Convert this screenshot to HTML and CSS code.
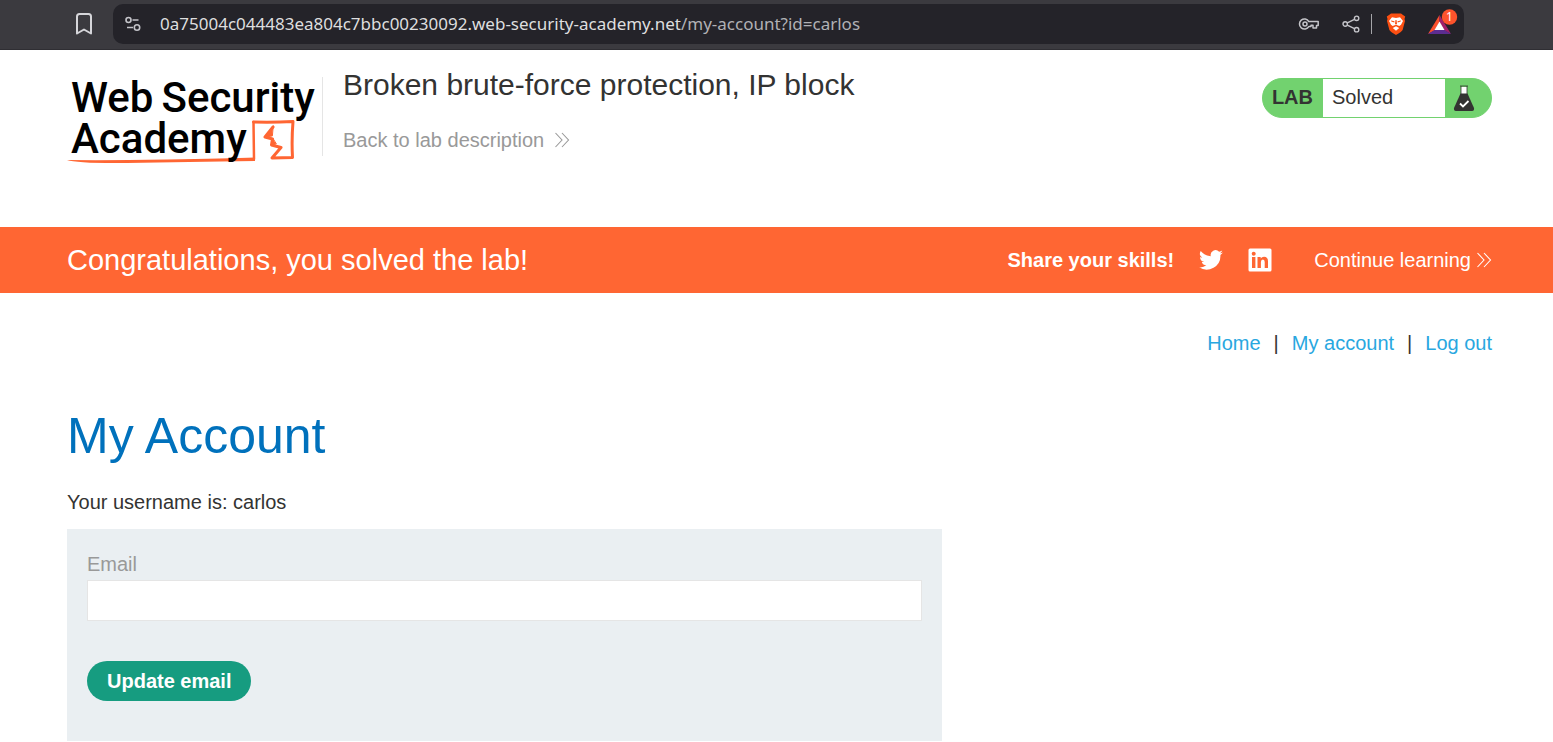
FILE: index.html
```
<!DOCTYPE html>
<html lang="en">
<head>
<meta charset="utf-8">
<title>Broken brute-force protection, IP block</title>
<link rel="stylesheet" href="styles.css">
</head>
<body>
<div class="browser">
  <button class="tool" aria-label="Bookmark">
    <svg width="18" height="24" viewBox="0 0 18 24" fill="none" stroke="#d6d6da" stroke-width="2" stroke-linejoin="round"><path d="M2 4.500Q2 2 4.500 2H13.500Q16 2 16 4.500V21.500L9 17.500L2 21.500Z"/></svg>
  </button>
  <div class="address">
    <button class="tool" aria-label="Site information">
      <svg width="18" height="18" viewBox="0 0 18 18" fill="none" stroke="#c4c4c9" stroke-width="1.600"><circle cx="4.500" cy="5" r="2.500"/><path d="M8.500 5H14.500M3 12.500H9"/><circle cx="13" cy="12.500" r="2.700"/></svg>
    </button>
    <div class="url">0a75004c044483ea804c7bbc00230092.web-security-academy.net<span class="path">/my-account?id=carlos</span></div>
    <div class="tools">
      <button class="tool key" aria-label="Passwords">
        <svg width="22" height="16" viewBox="0 0 22 16" fill="none" stroke="#c4c4c9" stroke-width="1.500" stroke-linejoin="round"><path d="M10.800 5.500A5 5 0 1 0 10.800 10.500H13V9.200H15V12H18.500V9.500H20.200V5.500Z"/><circle cx="7" cy="8" r="2"/></svg>
      </button>
      <button class="tool share" aria-label="Share">
        <svg width="18" height="18" viewBox="0 0 18 18" fill="none" stroke="#c4c4c9" stroke-width="1.400"><path d="M5.300 7.900L12.500 4.300M5.300 10.100L12.500 13.700"/><circle cx="3.200" cy="9" r="2.200"/><circle cx="14.600" cy="3.300" r="2.200"/><circle cx="14.600" cy="14.700" r="2.200"/></svg>
      </button>
      <span class="divider"></span>
      <button class="tool shield" aria-label="Brave Shields">
        <svg width="20" height="24" viewBox="0 0 20 24"><path fill="#fb4f12" d="M5 1.500H15L17 3L19.200 4.500L18.500 7L19 9L16.600 18Q15.500 20 10 23Q4.500 20 3.400 18L1 9L1.500 7L.8 4.500L3 3Z"/><path fill="#fff" d="M6 5.200L10 6L14 5.200L17 9L15 12.700L13.300 14L10 12.700L6.700 14L5 12.700L3 9ZM10 14.300L13.200 16L10 18.700L6.800 16Z"/><path fill="#fb4f12" d="M5 8.500L8.500 9.200L8.300 10.500L5.300 9.500ZM15 8.500L11.500 9.200L11.700 10.500L14.700 9.500ZM9.500 8H10.500L11 12L10 12.500L9 12Z"/></svg>
      </button>
      <button class="tool" aria-label="Rewards">
        <svg width="32" height="30" viewBox="0 0 32 30"><path fill="#fb4f2c" d="M12.500 6L1 25L7.500 21.500L12.500 13Z"/><path fill="#a0206a" d="M12.500 6L24 25L17.500 21.500L12.500 13Z"/><path fill="#5c2d91" d="M1 25L7.500 21H17.500L24 25Z"/><path fill="#fff" d="M12.500 12.500L17.500 21H7.500Z"/><circle cx="22.500" cy="8" r="7.700" fill="#fc532c"/><text x="22.500" y="12" text-anchor="middle" class="count">1</text></svg>
      </button>
    </div>
  </div>
</div>

<header class="header">
  <a class="logo" href="#" aria-label="Web Security Academy">
    <span class="line"><span>Web</span><span>Security</span></span>
    <span class="line">Academy</span>
    <svg class="mark" width="240" height="50" viewBox="0 0 240 50" fill="none" stroke="#ff6633" stroke-width="3" stroke-linejoin="round" stroke-linecap="round"><path fill="#ff6633" stroke="none" d="M0 44Q40 44.500 100 43.500T188 41.500V45Q120 46 60 47Q10 47.500 0 44Z"/><path stroke-width="2.500" d="M187 43L186.500 6"/><path d="M186.500 6Q207 6.500 226 5.500Q224.500 24 225.500 41.500L205 42L214 31.500L204.500 29L205.500 23L198 21L206 11"/><path fill="#ff6633" stroke-width="1" d="M206 10L198 21L205 20ZM206 23L204 29L209 28Z"/></svg>
  </a>
  <div class="heading">
    <h2>Broken brute-force protection, IP block</h2>
    <a class="back" href="#">Back to lab description
      <svg width="16" height="18" viewBox="0 0 16 18" fill="none" stroke="currentColor" stroke-width="1.100"><path d="M1.500 2L8 9L1.500 16M8 2L14.500 9L8 16"/></svg></a>
  </div>
  <div class="status">
    <span class="lab">LAB</span><span class="solved">Solved</span>
    <span class="flask"><svg width="22" height="28" viewBox="0 0 22 28"><path fill="#fff" d="M8 3H14V10H8Z"/><path fill="none" stroke="#333332" stroke-width=".8" d="M7 2H15M8 2V11M14 2V11"/><path fill="#333332" d="M7.500 9.500H14.500L21 24Q21.500 27 19 27H3Q.5 27 1 24Z"/><path d="M7 19.500L10 22.500L15.500 17" fill="none" stroke="#fff" stroke-width="1.800"/></svg></span>
  </div>
</header>

<section class="banner">
  <h4>Congratulations, you solved the lab!</h4>
  <div class="share-links">
    <b>Share your skills!</b>
    <a href="#" aria-label="Twitter"><svg width="26" height="26" viewBox="0 0 24 24" fill="#fff"><path d="M23 5.100a9 9 0 0 1-2.600.7 4.500 4.500 0 0 0 2-2.500 9 9 0 0 1-2.900 1.100A4.500 4.500 0 0 0 11.800 8.500 12.800 12.800 0 0 1 2.500 3.800a4.500 4.500 0 0 0 1.400 6 4.500 4.500 0 0 1-2-.6v.1a4.500 4.500 0 0 0 3.600 4.400 4.500 4.500 0 0 1-2 .1 4.500 4.500 0 0 0 4.200 3.100A9 9 0 0 1 1 18.800a12.800 12.800 0 0 0 19.700-11.400A9 9 0 0 0 23 5.100z"/></svg></a>
    <a href="#" aria-label="LinkedIn"><svg width="24" height="24" viewBox="0 0 24 24"><rect x=".5" y=".5" width="23" height="23" rx="1.500" fill="#fff"/><g fill="#ff6633"><circle cx="5.700" cy="5.700" r="2"/><path d="M4 9H7.400V20H4ZM9.500 9H12.700V10.500Q13.700 8.700 16 8.700Q20 8.700 20 13.200V20H16.700V14Q16.700 11.500 14.900 11.500Q12.900 11.500 12.900 14V20H9.500Z"/></g></svg></a>
  </div>
  <a class="continue" href="#">Continue learning
    <svg width="16" height="18" viewBox="0 0 16 18" fill="none" stroke="currentColor" stroke-width="1.100"><path d="M1.500 2L8 9L1.500 16M8 2L14.500 9L8 16"/></svg></a>
</section>

<main class="main">
  <nav class="nav"><a href="#">Home</a><span>|</span><a href="#">My account</a><span>|</span><a href="#">Log out</a></nav>
  <h1>My Account</h1>
  <p>Your username is: carlos</p>
  <form class="form">
    <label for="email">Email</label>
    <input id="email" type="email">
    <button type="button">Update email</button>
  </form>
</main>
</body>
</html>
```
FILE: styles.css
```
* { box-sizing: border-box; }
body {
  margin: 0;
  background: #fff;
  color: #333332;
  font: 20px/24px "Liberation Sans", Arial, sans-serif;
}
a { text-decoration: none; color: inherit; }
h1, h2, h4, p { margin: 0; font-weight: normal; }
svg { display: block; flex: none; }

.browser {
  display: flex;
  align-items: center;
  gap: 20px;
  height: 50px;
  padding: 0 89px 1px 75px;
  background: #3b3a3f;
  border-bottom: 1px solid #2f2e33;
}
.tool { padding: 0; border: 0; background: none; }
.address {
  flex: 1;
  display: flex;
  align-items: center;
  height: 40px;
  padding: 0 5px 0 11px;
  border-radius: 10px;
  background: #242329;
}
.url {
  flex: 1;
  margin-left: 18px;
  color: #dededf;
  font: 17px/24px "Noto Sans", sans-serif;
  white-space: nowrap;
}
.path { color: #b1b1b5; }
.tools { display: flex; align-items: center; }
.key { margin-right: 22px; }
.share { margin-right: 11px; }
.divider { width: 1px; height: 20px; background: #a5a5a9; }
.shield { margin: 0 21px 0 14px; }
.count { fill: #fff; font: 12px "Noto Sans", sans-serif; }

.header {
  display: flex;
  align-items: flex-start;
  padding: 17px 61px 0 67px;
  height: 177px;
}
.logo {
  position: relative;
  width: 256px;
  height: 88px;
  margin-top: 10px;
  padding-left: 4px;
  border-right: 1px solid #e5e5e5;
  border-image: linear-gradient(#e5e5e5 78px, transparent 78px) 1;
  color: #000;
  font: 500 42px/41px Roboto, sans-serif;
}
.line { display: flex; gap: 8px; position: relative; z-index: 1; }
.mark { position: absolute; left: 0; bottom: -1px; }
.heading { flex: 1; padding-left: 20px; }
.heading h2 { font-size: 30px; line-height: 36px; }
.back {
  display: inline-flex;
  align-items: center;
  gap: 10px;
  margin-top: 25px;
  color: #999;
}
.status {
  display: flex;
  height: 40px;
  margin-top: 11px;
  border: 1px solid #72d26f;
  border-radius: 20px;
  background: #72d26f;
  overflow: hidden;
  line-height: 37px;
}
.lab { padding: 0 10px 0 9px; font-weight: bold; }
.solved { width: 122px; padding-left: 9px; background: #fff; }
.flask { display: flex; align-items: center; padding: 0 16px 0 8px; }

.banner {
  display: flex;
  align-items: center;
  height: 66px;
  padding: 0 61px 0 67px;
  background: #ff6633;
  color: #fff;
}
.banner h4 { flex: 1; font-size: 29px; line-height: 34px; }
.share-links { display: flex; align-items: center; gap: 24px; }
.continue { display: flex; align-items: center; gap: 5px; margin-left: 42px; }

.main { padding: 38px 61px 0 67px; }
.nav { display: flex; justify-content: flex-end; gap: 13px; }
.nav a { color: #29a7df; }
.main h1 { margin-top: 51px; color: #0071bc; font-size: 50px; line-height: 60px; }
.main p { margin-top: 24px; }
.form {
  display: flex;
  flex-direction: column;
  align-items: flex-start;
  width: 62%;
  max-width: 875px;
  margin-top: 15px;
  padding: 23px 20px 40px;
  background: #eaeff2;
}
.form label { color: #999; }
.form input {
  width: 100%;
  height: 41px;
  margin: 4px 0 40px;
  padding: 0 10px;
  border: 1px solid #e5e5e5;
  background: #fff;
  font: inherit;
}
.form button {
  height: 40px;
  padding: 0 20px;
  border: 0;
  border-radius: 20px;
  background: #169c80;
  color: #fff;
  font: bold 20px/24px "Liberation Sans", Arial, sans-serif;
}
```
